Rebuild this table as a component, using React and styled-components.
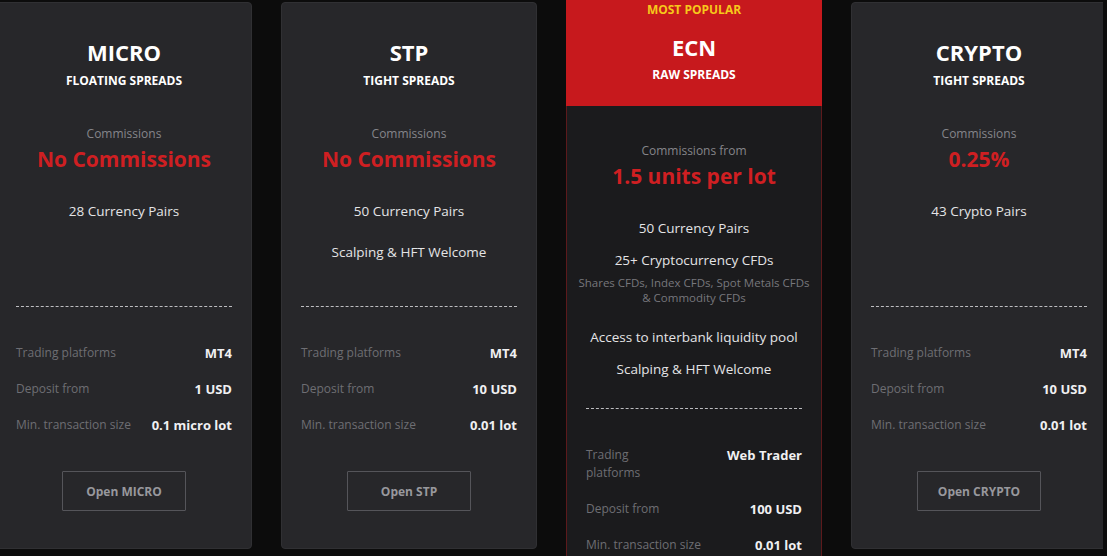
import styled, { createGlobalStyle } from "styled-components";

const plans = [
  {
    name: "MICRO",
    spread: "FLOATING SPREADS",
    commissionLabel: "Commissions",
    commission: "No Commissions",
    features: ["28 Currency Pairs"],
    specs: [
      ["Trading platforms", "MT4"],
      ["Deposit from", "1 USD"],
      ["Min. transaction size", "0.1 micro lot"],
    ],
  },
  {
    name: "STP",
    spread: "TIGHT SPREADS",
    commissionLabel: "Commissions",
    commission: "No Commissions",
    features: ["50 Currency Pairs", "Scalping & HFT Welcome"],
    specs: [
      ["Trading platforms", "MT4"],
      ["Deposit from", "10 USD"],
      ["Min. transaction size", "0.01 lot"],
    ],
  },
  {
    name: "ECN",
    spread: "RAW SPREADS",
    popular: true,
    commissionLabel: "Commissions from",
    commission: "1.5 units per lot",
    features: [
      "50 Currency Pairs",
      "25+ Cryptocurrency CFDs",
      { small: ["Shares CFDs, Index CFDs, Spot Metals CFDs", "& Commodity CFDs"] },
      "Access to interbank liquidity pool",
      "Scalping & HFT Welcome",
    ],
    specs: [
      [["Trading", <br key="b" />, "platforms"], "Web Trader"],
      ["Deposit from", "100 USD"],
      ["Min. transaction size", "0.01 lot"],
    ],
  },
  {
    name: "CRYPTO",
    spread: "TIGHT SPREADS",
    commissionLabel: "Commissions",
    commission: "0.25%",
    features: ["43 Crypto Pairs"],
    specs: [
      ["Trading platforms", "MT4"],
      ["Deposit from", "10 USD"],
      ["Min. transaction size", "0.01 lot"],
    ],
  },
];

export default function App() {
  return (
    <>
      <GlobalStyle />
      <Page>
        {plans.map((plan) => (
          <PlanCard key={plan.name} plan={plan} />
        ))}
      </Page>
    </>
  );
}

function PlanCard({ plan }) {
  const featured = !!plan.popular;

  return (
    <Card $featured={featured}>
      {/* 카드 헤더 */}
      <Header $featured={featured}>
        {featured && <Popular>MOST POPULAR</Popular>}
        <Title $featured={featured}>{plan.name}</Title>
        <Subtitle $featured={featured}>{plan.spread}</Subtitle>
      </Header>

      <Body $featured={featured}>
        <CommissionLabel>{plan.commissionLabel}</CommissionLabel>
        <CommissionValue>{plan.commission}</CommissionValue>

        {/* 특징 목록 */}
        <Features $featured={featured}>
          {plan.features.map((f, i) =>
            typeof f === "string" ? (
              <Feature key={i}>{f}</Feature>
            ) : (
              <SmallNote key={i}>
                {f.small.map((line) => (
                  <div key={line}>{line}</div>
                ))}
              </SmallNote>
            )
          )}
        </Features>

        <Divider />

        {/* 스펙 */}
        <Specs>
          {plan.specs.map(([label, value], i) => (
            <SpecRow key={i}>
              <SpecLabel>{label}</SpecLabel>
              <SpecValue>{value}</SpecValue>
            </SpecRow>
          ))}
        </Specs>

        <OpenButton>Open {plan.name}</OpenButton>
      </Body>
    </Card>
  );
}

// Styled Components
const GlobalStyle = createGlobalStyle`
  html, body {
    margin: 0;
    padding: 0;
    background: #0c0c0c;
    overflow: hidden;
  }
  body {
    font-family: "Open Sans", "Noto Sans", Arial, sans-serif;
  }
`;

const Page = styled.div`
  width: 1107px;
  height: 556px;
  overflow: hidden;
  display: flex;
  align-items: flex-start;
  gap: 29px;
  margin-left: -4px;
`;

const Card = styled.div`
  flex: 0 0 256px;
  width: 256px;
  margin-top: ${(p) => (p.$featured ? "0" : "2px")};
  height: ${(p) => (p.$featured ? "auto" : "547px")};
  box-sizing: border-box;
  display: flex;
  flex-direction: column;
  background: ${(p) => (p.$featured ? "#1b1b1d" : "#27272a")};
  border: 1px solid ${(p) => (p.$featured ? "#5c1a1c" : "#303033")};
  border-top: ${(p) => (p.$featured ? "none" : "1px solid #303033")};
  border-radius: ${(p) => (p.$featured ? "0" : "4px")};
  text-align: center;
`;

const Header = styled.div`
  display: flex;
  flex-direction: column;
  align-items: center;
  background: ${(p) => (p.$featured ? "#c7191d" : "transparent")};
  margin: ${(p) => (p.$featured ? "0 -1px" : "0")};
  padding: ${(p) => (p.$featured ? "2px 0 23px" : "34px 0 0")};
`;

const Popular = styled.div`
  color: #f6c81b;
  font-size: 12px;
  font-weight: 700;
  line-height: 16px;
`;

const Title = styled.div`
  margin-top: ${(p) => (p.$featured ? "14px" : "0")};
  color: #ffffff;
  font-size: 22px;
  font-weight: 700;
  line-height: 30px;
`;

const Subtitle = styled.div`
  margin-top: ${(p) => (p.$featured ? "5px" : "6px")};
  color: #ffffff;
  font-size: 12px;
  font-weight: 700;
  line-height: 16px;
`;

const Body = styled.div`
  display: flex;
  flex-direction: column;
  align-items: center;
  padding: ${(p) => (p.$featured ? "37px 19px 40px" : "37px 19px 0")};
`;

const CommissionLabel = styled.div`
  color: #85858a;
  font-size: 12px;
  line-height: 16px;
`;

const CommissionValue = styled.div`
  margin-top: 3px;
  color: #cf1f22;
  font-size: 21px;
  font-weight: 700;
  line-height: 28px;
`;

const Features = styled.div`
  display: flex;
  flex-direction: column;
  align-items: center;
  gap: ${(p) => (p.$featured ? "12px" : "21px")};
  width: 100%;
  margin-top: 28px;
  height: ${(p) => (p.$featured ? "auto" : "105px")};
  padding-bottom: ${(p) => (p.$featured ? "29px" : "0")};
`;

const Feature = styled.div`
  color: #e4e4e6;
  font-size: 13.5px;
  line-height: 20px;
`;

const SmallNote = styled.div`
  margin: -7px -14px 10px;
  color: #77777c;
  font-size: 11.5px;
  line-height: 15px;
  white-space: nowrap;
`;

const Divider = styled.div`
  width: 100%;
  border-top: 1px dashed #bdbdc0;
`;

const Specs = styled.div`
  display: flex;
  flex-direction: column;
  gap: 18px;
  width: 100%;
  margin-top: 37px;
`;

const SpecRow = styled.div`
  display: flex;
  justify-content: space-between;
  align-items: flex-start;
  gap: 12px;
`;

const SpecLabel = styled.div`
  color: #6e6e73;
  font-size: 12px;
  line-height: 18px;
  text-align: left;
`;

const SpecValue = styled.div`
  color: #f0f0f2;
  font-size: 13px;
  font-weight: 700;
  line-height: 18px;
  text-align: right;
  white-space: nowrap;
`;

const OpenButton = styled.button`
  margin-top: 37px;
  width: 124px;
  height: 40px;
  background: transparent;
  border: 1px solid #55555a;
  border-radius: 1px;
  color: #98989d;
  font-family: inherit;
  font-size: 12px;
  font-weight: 700;
  cursor: pointer;
`;
